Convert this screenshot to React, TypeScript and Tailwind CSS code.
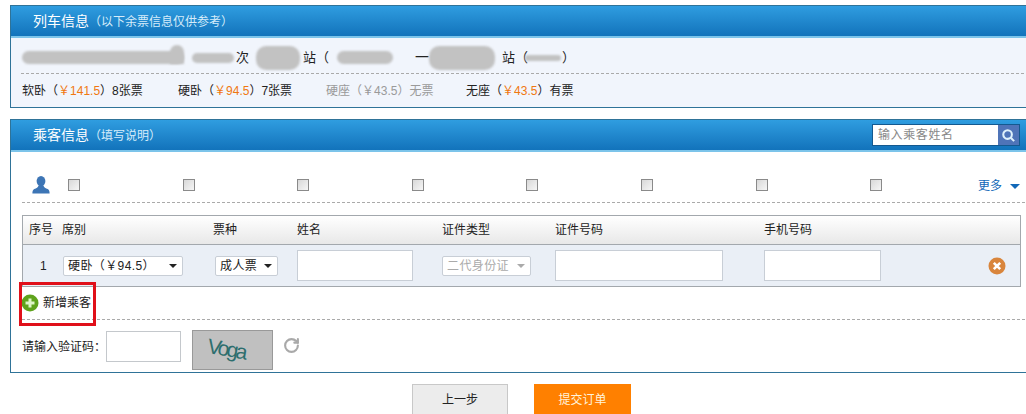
import { RotateCw } from "lucide-react";

const font = { fontFamily: '"Liberation Sans", "Noto Sans CJK SC", sans-serif' };

function PanelHeader({ title, note, children }: { title: string; note: string; children?: React.ReactNode }) {
  return (
    <div className="flex h-[32px] items-center justify-between border-b-2 border-[#7cc4ea] bg-gradient-to-b from-[#2f9de0] to-[#1273bb] pl-[22px] text-white">
      <div className="flex items-baseline">
        <span className="text-[14px]">{title}</span>
        <span className="text-[12px] text-[#d5ecfa]">{note}</span>
      </div>
      {children}
    </div>
  );
}

function Blob({ className }: { className: string }) {
  return <span className={`inline-block bg-[#c2c2c2] blur-[1px] ${className}`} />;
}

function Price({ seat, price, rest, off }: { seat: string; price: string; rest: string; off?: boolean }) {
  return (
    <span className={off ? "text-[#9a9a9a]" : "text-[#222]"}>
      {seat}（<span className={off ? "" : "text-[#f07810]"}>￥{price}</span>）{rest}
    </span>
  );
}

function FakeSelect({ label, className, disabled }: { label: string; className: string; disabled?: boolean }) {
  return (
    <div
      className={`flex h-[20px] items-center justify-between rounded-[2px] border border-[#c8ced6] bg-white pl-[4px] pr-[5px] text-[12px] ${disabled ? "text-[#aaa]" : "text-[#222]"} ${className}`}
    >
      <span className="tracking-[0.4px]">{label}</span>
      <span
        className={`h-0 w-0 border-x-[4px] border-t-[4px] border-x-transparent ${disabled ? "border-t-[#aaa]" : "border-t-[#222]"}`}
      />
    </div>
  );
}

function TextBox({ className }: { className: string }) {
  return <input className={`h-[31px] border border-[#c8ced6] bg-white ${className}`} />;
}

const cols = "grid grid-cols-[39px_151px_84px_145px_113px_209px_224px_1fr]";

export default function App() {
  return (
    <div className="relative h-[414px] w-[1026px] overflow-hidden bg-white pt-[5px] pl-[10px] text-[12px] text-[#222]" style={font}>
      {/* train info */}
      <div className="w-[1030px] border border-[#2f7398] bg-[#f1f5fc]">
        <PanelHeader title="列车信息" note="（以下余票信息仅供参考）" />
        <div className="mx-[10px] flex h-[36px] items-center border-b border-dashed border-[#aaa] pt-[4px] text-[14px]">
          <Blob className="ml-px h-[13px] w-[162px] rounded-[7px]" />
          <Blob className="-ml-[14px] mt-[-6px] h-[19px] w-[14px] rounded-t-full" />
          <Blob className="ml-[8px] h-[10px] w-[42px] rounded-full" />
          <span className="ml-[2px] text-[13px]">次</span>
          <Blob className="ml-[7px] h-[24px] w-[44px] rounded-[10px]" />
          <span className="ml-[3px] text-[13px]">站（</span>
          <Blob className="ml-[8px] h-[13px] w-[56px] rounded-full" />
          <span className="ml-[22px]">一</span>
          <Blob className="h-[24px] w-[66px] rounded-[10px]" />
          <span className="ml-[7px] text-[13px]">站（</span>
          <Blob className="ml-[-3px] h-[6px] w-[36px] rounded-full" />
          <span className="ml-[1px] text-[13px]">）</span>
        </div>
        <div className="ml-[11px] flex h-[33px] items-center">
          <span className="w-[156px]"><Price seat="软卧" price="141.5" rest="8张票" /></span>
          <span className="w-[148px]"><Price seat="硬卧" price="94.5" rest="7张票" /></span>
          <span className="w-[140px]"><Price seat="硬座" price="43.5" rest="无票" off /></span>
          <Price seat="无座" price="43.5" rest="有票" />
        </div>
      </div>

      {/* passengers */}
      <div className="mt-[11px] h-[254px] w-[1030px] border border-[#2f7398] bg-white">
        <PanelHeader title="乘客信息" note="（填写说明）">
          <div className="mr-[19px] flex h-[22px] w-[148px] border border-[#14598f] bg-white">
            <input
              placeholder="输入乘客姓名"
              className="min-w-0 flex-1 pl-[5px] text-[12px] tracking-[0.6px] placeholder:text-[#888]"
            />
            <div className="flex w-[21px] items-center justify-center bg-[#4f74b8]">
              <svg viewBox="0 0 16 16" className="h-[15px] w-[15px]" fill="none" stroke="#dff1fb" strokeWidth="2.2">
                <circle cx="7" cy="7" r="4.6" />
                <path d="M10.4 10.4 14 14" />
              </svg>
            </div>
          </div>
        </PanelHeader>

        <div className="relative ml-[11px] mr-[14px] flex h-[51px] items-center border-b border-dashed border-[#aaa] pt-[15px]">
          <svg viewBox="0 0 18 18" className="ml-[10px] h-[19px] w-[18px]" fill="#3d75b5">
            <ellipse cx="9" cy="5.6" rx="4.4" ry="5.2" />
            <path d="M6.5 10c-.3 2-2.2 2.6-4.2 3.6C.8 14.4.4 16 .4 18h17.2c0-2-.4-3.6-1.9-4.4-2-1-3.9-1.6-4.2-3.6z" />
          </svg>
          <div className="ml-[18px] flex gap-[102.6px]">
            {Array.from({ length: 8 }).map((_, i) => (
              <span key={i} className="h-[12px] w-[12px] border border-[#8a8a8a] bg-gradient-to-br from-[#d8d8d8] to-[#f6f6f6]" />
            ))}
          </div>
          <span className="absolute right-[5px] top-[25px] flex items-center text-[#1268b8]">
            更多
            <span className="ml-[8px] h-0 w-0 border-x-[5px] border-t-[5px] border-x-transparent border-t-[#1268b8]" />
          </span>
        </div>

        <div className="ml-[11px] mr-[18px] mt-[12px] border border-[#a3a8ad]">
          <div className={`${cols} h-[29px] items-center border-b border-[#a3a8ad] bg-gradient-to-b from-white to-[#e8e8e8]`}>
            <span className="pl-[6px]">序号</span>
            <span>席别</span>
            <span>票种</span>
            <span>姓名</span>
            <span>证件类型</span>
            <span>证件号码</span>
            <span>手机号码</span>
          </div>
          <div className={`${cols} h-[41px] items-center bg-[#eaeff6]`}>
            <span className="pl-[17px]">1</span>
            <FakeSelect label="硬卧（￥94.5）" className="ml-px w-[120px]" />
            <FakeSelect label="成人票" className="ml-[2px] w-[63px]" />
            <TextBox className="w-[116px]" />
            <FakeSelect label="二代身份证" disabled className="w-[89px]" />
            <TextBox className="w-[168px]" />
            <TextBox className="w-[117px]" />
            <svg viewBox="0 0 18 18" className="h-[18px] w-[18px]">
              <circle cx="9" cy="9" r="8.5" fill="#d9853c" />
              <path d="M5.8 5.8l6.4 6.4M12.2 5.8l-6.4 6.4" stroke="#fff" strokeWidth="2.6" />
            </svg>
          </div>
        </div>

        <div className="ml-[11px] mr-[14px] flex h-[33px] items-center border-b border-dashed border-[#aaa]">
          <svg viewBox="0 0 18 18" className="-ml-px h-[18px] w-[18px]">
            <circle cx="9" cy="9" r="8.5" fill="#5fa31c" />
            <path d="M9 4.5v9M4.5 9h9" stroke="#dff5c8" strokeWidth="3" />
          </svg>
          <span className="ml-[4px]">新增乘客</span>
        </div>

        <div className="ml-[11px] mt-[10px] flex items-start">
          <span className="mt-[8px] w-[84px]">请输入验证码：</span>
          <input className="mt-px h-[31px] w-[75px] border border-[#c4c8cc]" />
          <div className="ml-[11px] flex h-[40px] w-[81px] overflow-hidden border border-[#999] bg-[#c0c0c0] pl-[14px]">
            <span className="mt-[3px] rotate-[10deg] text-[21px] leading-[30px] tracking-[-2.5px] text-[#2d6e6e]">
              Voga
            </span>
          </div>
          <RotateCw className="ml-[10px] mt-[7px] h-[17px] w-[17px] text-[#a9a9a9]" strokeWidth={3} />
        </div>
      </div>

      {/* actions */}
      <div className="mt-[11px] flex pl-[402px]">
        <button className="h-[31px] w-[96px] border border-[#c8c8c8] bg-[#ececec] text-[12px] text-[#222]">上一步</button>
        <button className="ml-[26px] h-[31px] w-[97px] bg-[#ff8000] text-[12px] text-[#fff3dc]">提交订单</button>
      </div>

      {/* annotation from the original screenshot */}
      <div className="absolute left-[19px] top-[282px] h-[44px] w-[77px] border-[3px] border-[#e0101a]" />
    </div>
  );
}
